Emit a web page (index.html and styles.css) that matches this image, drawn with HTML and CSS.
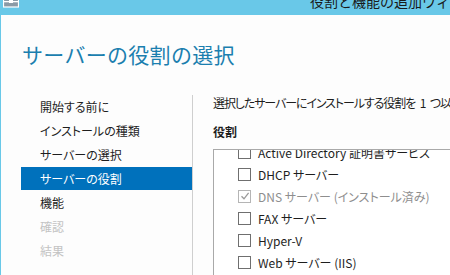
FILE: index.html
```html
<!DOCTYPE html>
<html lang="ja">
<head>
<meta charset="utf-8">
<link rel="stylesheet" href="styles.css">
</head>
<body>
<div class="window">
  <div class="titlebar">
    <svg class="app-icon" width="16" height="8" viewBox="0 0 16 8">
      <rect x="0.5" y="-4" width="15" height="11" fill="#8a9aa6" stroke="#ffffff" stroke-width="1.2"/>
      <rect x="0" y="1" width="16" height="1.3" fill="#ffffff"/>
      <rect x="6" y="0" width="4" height="3" fill="#ffffff"/>
    </svg>
    <span class="title">役割と機能の追加ウィザード</span>
  </div>
  <div class="main">
    <h1 class="heading">サーバーの役割の選択</h1>
    <div class="body">
      <ul class="nav">
        <li class="nav-item">開始する前に</li>
        <li class="nav-item">インストールの種類</li>
        <li class="nav-item">サーバーの選択</li>
        <li class="nav-item active">サーバーの役割</li>
        <li class="nav-item">機能</li>
        <li class="nav-item disabled">確認</li>
        <li class="nav-item disabled">結果</li>
      </ul>
      <div class="content">
        <p class="desc">選択したサーバーにインストールする役割を 1 つ以上選択します。</p>
        <p class="label">役割</p>
        <div class="listbox">
          <ul class="roles">
            <li class="role"><span class="box"></span>Active Directory 証明書サービス</li>
            <li class="role"><span class="box"></span>DHCP サーバー</li>
            <li class="role installed"><span class="box checked"><svg width="10" height="10" viewBox="0 0 10 10"><path d="M1.5 5.2 L4 7.8 L8.6 1.8" fill="none" stroke="#9a9a9a" stroke-width="1.3"/></svg></span>DNS サーバー (インストール済み)</li>
            <li class="role"><span class="box"></span>FAX サーバー</li>
            <li class="role"><span class="box"></span>Hyper-V</li>
            <li class="role"><span class="box"></span>Web サーバー (IIS)</li>
            <li class="role"><span class="box"></span>Windows Server Essentials エクスペリエンス</li>
          </ul>
        </div>
      </div>
    </div>
  </div>
</div>
</body>
</html>
```
FILE: styles.css
```css
html, body {
  margin: 0;
  padding: 0;
  height: 100%;
  overflow: hidden;
  background: #fdfdfd;
  font-family: "Noto Sans CJK JP", "Noto Sans", sans-serif;
  font-feature-settings: "palt";
}
.window {
  width: 450px;
  height: 275px;
  display: flex;
  flex-direction: column;
}
.titlebar {
  height: 15px;
  flex: none;
  background: #69c8e8;
  display: flex;
  align-items: flex-start;
  overflow: hidden;
  position: relative;
}
.app-icon {
  margin-left: 3px;
  display: block;
  flex: none;
}
.title {
  flex: none;
  margin-left: 291px;
  margin-top: -9px;
  font-size: 14px;
  line-height: 20px;
  color: #1a1a1a;
  white-space: nowrap;
  font-feature-settings: normal;
}
.main {
  flex: 1;
  border-left: 1px solid #69c8e8;
  background: #fdfdfd;
  overflow: hidden;
}
.heading {
  margin: 25px 0 0 21px;
  font-size: 21px;
  line-height: 28px;
  font-weight: normal;
  color: #1b7faf;
  font-feature-settings: normal;
  letter-spacing: 0.3px;
}
.body {
  display: flex;
  margin-top: 27px;
}
.nav {
  list-style: none;
  margin: 0 0 0 20px;
  padding: 0;
  width: 171px;
  border-right: 1px solid #cfcfcf;
  height: 200px;
}
.nav-item {
  height: 24px;
  line-height: 24px;
  padding-left: 19px;
  font-size: 12px;
  color: #1e1e1e;
  white-space: nowrap;
}
.nav-item.active {
  background: #0071bc;
  color: #ffffff;
  height: 23px;
  line-height: 23px;
  margin-bottom: 1px;
}
.nav-item.disabled {
  color: #c3c3c3;
}
.content {
  padding-left: 20px;
  flex: 1;
  min-width: 0;
}
.desc {
  margin: 0;
  font-size: 12px;
  line-height: 16px;
  color: #1e1e1e;
  white-space: nowrap;
  letter-spacing: -1.1px;
  word-spacing: 3px;
}
.label {
  margin: 13px 0 0 0;
  font-size: 12px;
  line-height: 16px;
  font-weight: bold;
  color: #1e1e1e;
}
.listbox {
  margin-top: 9px;
  border: 1px solid #a9a9a9;
  border-right: none;
  height: 140px;
  overflow: hidden;
  background: #ffffff;
}
.roles {
  list-style: none;
  margin: -9px 0 0 0;
  padding: 0 0 0 24px;
}
.role {
  height: 22px;
  display: flex;
  align-items: center;
  font-size: 12px;
  color: #1e1e1e;
  white-space: nowrap;
}
.role.installed {
  color: #8e8e8e;
}
.box {
  width: 11px;
  height: 11px;
  border: 1px solid #6f6f6f;
  background: #ffffff;
  margin-right: 7px;
  flex: none;
  display: flex;
  align-items: center;
  justify-content: center;
}
.box.checked {
  border-color: #b5b5b5;
}
```
